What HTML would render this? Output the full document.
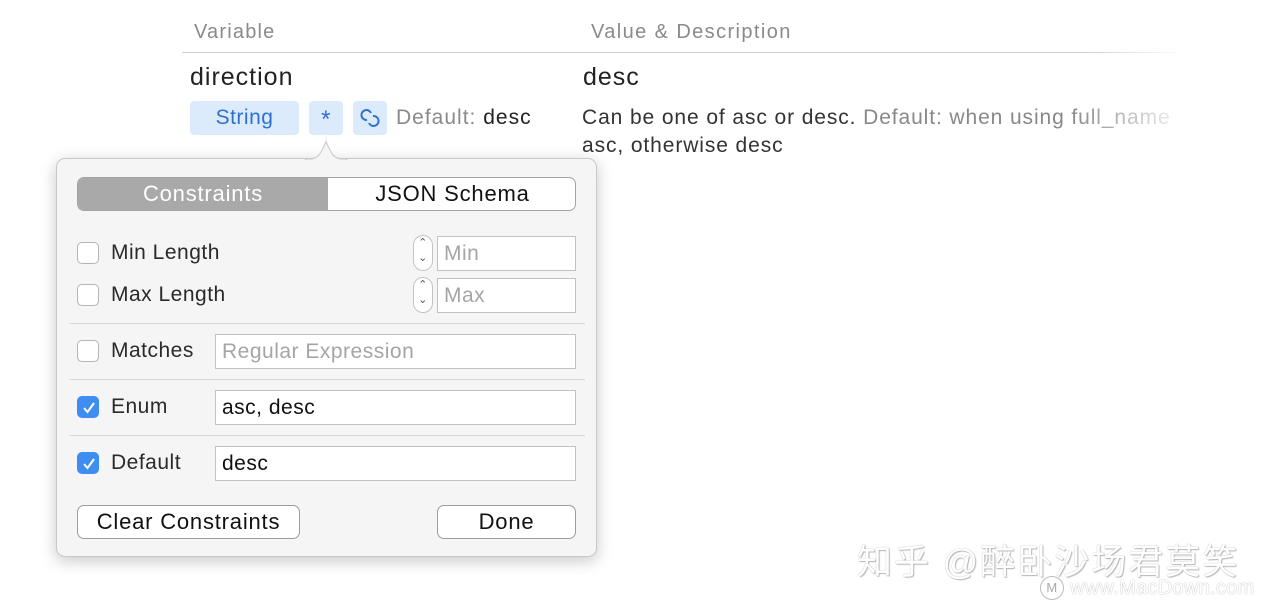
<!DOCTYPE html>
<html><head><meta charset="utf-8"><style>
body{margin:0;width:1274px;height:608px;background:#fff;position:relative;overflow:hidden;font-family:"Liberation Sans","Noto Sans CJK SC",sans-serif;letter-spacing:0.5px;}
.a{position:absolute;white-space:nowrap;}
.pill{position:absolute;background:#dcebfb;border-radius:4px;color:#2f6fcf;text-align:center;}
.pop{position:absolute;left:56px;top:158px;width:539px;height:397px;background:#f5f5f5;border:1px solid #c8c8c8;border-radius:9px;box-shadow:0 4px 16px rgba(0,0,0,.22);}
.cb{position:absolute;width:22px;height:22px;border:1px solid #b4b4b4;border-radius:5px;background:#fff;box-sizing:border-box;}
.cb.on{background:#3d8ef0;border-color:#3d8ef0;}
.inp{position:absolute;background:#fff;border:1px solid #c2c2c2;box-sizing:border-box;font-size:21px;padding-left:6px;line-height:34px;color:#111;}
.ph{color:#a5a5a5;}
.lbl{position:absolute;font-size:21px;color:#2a2a2a;}
.sep{position:absolute;left:12px;width:516px;height:1px;background:#d6d6d6;}
.btn{position:absolute;height:34px;border:1px solid #9d9d9d;border-radius:7px;background:#fff;box-sizing:border-box;font-size:22px;text-align:center;line-height:32px;color:#111;letter-spacing:0.8px;}
.step{position:absolute;width:20px;height:36px;border:1px solid #c4c4c4;border-radius:10px;background:#fff;box-sizing:border-box;font-size:11px;color:#555;text-align:center;line-height:15px;}
</style></head><body>
<div class="a" style="left:194px;top:21px;font-size:20px;color:#8a8a8a;letter-spacing:1.2px">Variable</div>
<div class="a" style="left:591px;top:21px;font-size:20px;color:#8a8a8a;letter-spacing:1.4px">Value &amp; Description</div>
<div class="a" style="left:182px;top:52px;width:1003px;height:1px;background:linear-gradient(90deg,#cfcfcf 90%,#fff)"></div>
<div class="a" style="left:190px;top:63px;font-size:25px;color:#222;letter-spacing:1px">direction</div>
<div class="a" style="left:583px;top:63px;font-size:25px;color:#222;letter-spacing:1px">desc</div>
<div class="pill" style="left:190px;top:101px;width:109px;height:34px;line-height:34px;font-size:21px">String</div>
<div class="pill" style="left:309px;top:101px;width:34px;height:34px;line-height:38px;font-size:24px">*</div>
<div class="pill" style="left:353px;top:101px;width:34px;height:34px">
<svg width="34" height="34" viewBox="0 0 34 34"><g fill="none" stroke="#2f6fcf" stroke-width="2"><path d="M14 19a5 5 0 1 1 4-7"/><path d="M20 15a5 5 0 1 1-4 7"/></g></svg></div>
<div class="a" style="left:396px;top:106px;font-size:21px;color:#8a8a8a;letter-spacing:1px">Default: <span style="color:#222">desc</span></div>
<div class="a" style="left:582px;top:106px;font-size:21px;color:#333;-webkit-mask-image:linear-gradient(90deg,#000 80%,transparent);width:610px;overflow:hidden;letter-spacing:0.9px">Can be one of asc or desc. <span style="color:#888">Default: when using full_name</span></div>
<div class="a" style="left:582px;top:134px;font-size:21px;color:#333;letter-spacing:0.9px">asc, otherwise desc</div>

<div class="pop">
<svg style="position:absolute;left:248px;top:-26px" width="42" height="28" viewBox="0 0 42 28"><path d="M0 27 C10 27 14 24 18 18 L21 1 L24 18 C28 24 32 27 42 27 Z" fill="#f5f5f5"/><path d="M0 26.5 C10 26.5 13 24 16 19 L21 9 L26 19 C29 24 32 26.5 42 26.5" fill="none" stroke="#c8c8c8"/><path d="M1 27.5H41" stroke="#f5f5f5" stroke-width="2"/></svg>
<div style="position:absolute;left:20px;top:18px;width:499px;height:34px;border:1px solid #a4a4a4;border-radius:7px;overflow:hidden;box-sizing:border-box;background:#fff">
<div style="position:absolute;left:0;top:0;width:250px;height:34px;background:#a9a9a9;color:#fff;font-size:22px;text-align:center;line-height:32px;letter-spacing:0.8px">Constraints</div>
<div style="position:absolute;left:250px;top:0;width:249px;height:34px;color:#111;font-size:22px;text-align:center;line-height:32px;letter-spacing:0.8px">JSON Schema</div>
</div>
<div class="cb" style="left:20px;top:83px"></div><div class="lbl" style="left:54px;top:82px">Min Length</div>
<div class="step" style="left:356px;top:76px">⌃<br>⌄</div>
<div class="inp ph" style="left:380px;top:77px;width:139px;height:35px">Min</div>
<div class="cb" style="left:20px;top:125px"></div><div class="lbl" style="left:54px;top:124px">Max Length</div>
<div class="step" style="left:356px;top:118px">⌃<br>⌄</div>
<div class="inp ph" style="left:380px;top:119px;width:139px;height:35px">Max</div>
<div class="sep" style="top:164px"></div>
<div class="cb" style="left:20px;top:181px"></div><div class="lbl" style="left:54px;top:180px">Matches</div>
<div class="inp ph" style="left:158px;top:175px;width:361px;height:35px">Regular Expression</div>
<div class="sep" style="top:220px"></div>
<div class="cb on" style="left:20px;top:237px"><svg width="22" height="22"><path d="M6 11l3.5 4L16 6" fill="none" stroke="#fff" stroke-width="2"/></svg></div><div class="lbl" style="left:54px;top:236px">Enum</div>
<div class="inp" style="left:158px;top:231px;width:361px;height:35px">asc, desc</div>
<div class="sep" style="top:276px"></div>
<div class="cb on" style="left:20px;top:293px"><svg width="22" height="22"><path d="M6 11l3.5 4L16 6" fill="none" stroke="#fff" stroke-width="2"/></svg></div><div class="lbl" style="left:54px;top:292px">Default</div>
<div class="inp" style="left:158px;top:287px;width:361px;height:35px">desc</div>
<div class="btn" style="left:20px;top:346px;width:223px">Clear Constraints</div>
<div class="btn" style="left:380px;top:346px;width:139px">Done</div>
</div>

<div class="a" style="left:857px;top:534px;font-size:35px;letter-spacing:2px;color:#fff;text-shadow:0 0 1px #999,1px 1px 1px #bbb">知乎 @醉卧沙场君莫笑</div>
<div class="a" style="left:1040px;top:576px;width:22px;height:22px;border:1px solid #bbb;border-radius:50%;font-size:13px;color:#aaa;text-align:center;line-height:22px">M</div>
<div class="a" style="left:1070px;top:577px;font-size:20px;letter-spacing:0.3px;color:#fff;text-shadow:0 0 1px #888">www.MacDown.com</div>
</body></html>
